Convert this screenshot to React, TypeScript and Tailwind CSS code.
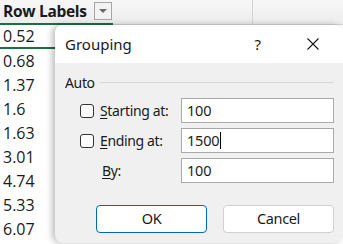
import React from "react";

const rows = ["0.52", "0.68", "1.37", "1.6", "1.63", "3.01", "4.74", "5.33", "6.07"];

const Checkbox = () => (
  <span className="block h-[14px] w-[14px] shrink-0 rounded-[3px] border border-[#333] bg-[#fbfbfb]" />
);

const Field = ({ value, caret }: { value: string; caret?: boolean }) => (
  <div className="flex h-[25px] w-[153px] items-center border border-[#a9a9a9] bg-white pl-[5px] text-[14.5px] tracking-[-0.2px] text-[#1a1a1a]">
    {value}
    {caret && <span className="ml-[1px] h-[17px] w-[1px] bg-black" />}
  </div>
);

export default function App() {
  return (
    <div className="relative h-[244px] w-[343px] overflow-hidden bg-white font-['Noto_Sans',sans-serif]">
      {/* header row */}
      <div className="flex h-[25px] bg-gradient-to-b from-[#f7f7f7] to-[#ececec]">
        <div className="flex w-[113px] items-center justify-between border-b-2 border-[#1e6e43] pl-[3px] pr-[1px]">
          <span className="font-['Open_Sans',sans-serif] text-[15.5px] font-bold tracking-[-0.3px] text-[#1a1a1a]">
            Row Labels
          </span>
          <span className="mb-[1px] flex h-[18px] w-[18px] items-center justify-center border border-[#a6a6a6] bg-[#f3f3f3]">
            <svg width="8" height="5" viewBox="0 0 8 5">
              <path d="M0 0h8L4 4z" fill="#6b6b6b" />
            </svg>
          </span>
        </div>
        <div className="w-[140px] border-b border-r border-[#d4d4d4]" />
        <div className="flex-1 border-b border-[#d4d4d4]" />
      </div>

      {/* cells */}
      <div className="flex flex-col">
        {rows.map((v, i) => (
          <div
            key={v}
            className={`flex h-[24px] w-[113px] items-center pl-[3px] font-['Open_Sans',sans-serif] text-[16px] text-[#1a1a1a] ${
              i === 0 ? "border-b-2 border-[#1e6e43]" : ""
            }`}
          >
            {v}
          </div>
        ))}
      </div>

      {/* dialog */}
      <div className="absolute left-[55px] top-[25px] flex h-[218px] w-[288px] flex-col overflow-hidden rounded-lg bg-[#f0f0f0] shadow-[-3px_0_6px_rgba(0,0,0,0.25)]">
        <div className="flex h-[38px] items-center bg-white pl-[10px] text-[15px] text-[#1a1a1a]">
          <span className="flex-1">Grouping</span>
          <span className="mr-[46px] text-[15px]">?</span>
          <svg className="mr-[24px]" width="12" height="12" viewBox="0 0 12 12">
            <path d="M0.5 0.5l11 11M11.5 0.5l-11 11" stroke="#1a1a1a" strokeWidth="1.1" />
          </svg>
        </div>

        <div className="flex flex-col pl-[10px] pr-[9px] text-[14px] tracking-[-0.35px] text-[#1a1a1a]">
          <div className="mt-[9px] flex items-center">
            <span>Auto</span>
            <span className="ml-[5px] h-[1px] flex-1 bg-[#d6d6d6]" />
          </div>

          <div className="mt-[5px] flex flex-col gap-[5px] pl-[15px]">
            <div className="flex items-center">
              <Checkbox />
              <span className="ml-[6px] flex-1">
                <span className="underline underline-offset-2">S</span>tarting at:
              </span>
              <Field value="100" />
            </div>
            <div className="flex items-center">
              <Checkbox />
              <span className="ml-[6px] flex-1">
                <span className="underline underline-offset-2">E</span>nding at:
              </span>
              <Field value="1500" caret />
            </div>
            <div className="flex items-center">
              <span className="ml-[22px] flex-1">
                <span className="underline underline-offset-2">B</span>y:
              </span>
              <Field value="100" />
            </div>
          </div>

          <div className="mt-[22px] flex justify-between pl-[31px]">
            <button className="h-[28px] w-[111px] rounded-[4px] border border-[#0067c0] bg-white text-[14.5px] text-[#1a1a1a]">
              OK
            </button>
            <button className="h-[28px] w-[111px] rounded-[4px] border border-[#d0d0d0] bg-white text-[14.5px] text-[#1a1a1a]">
              Cancel
            </button>
          </div>
        </div>
      </div>
    </div>
  );
}
